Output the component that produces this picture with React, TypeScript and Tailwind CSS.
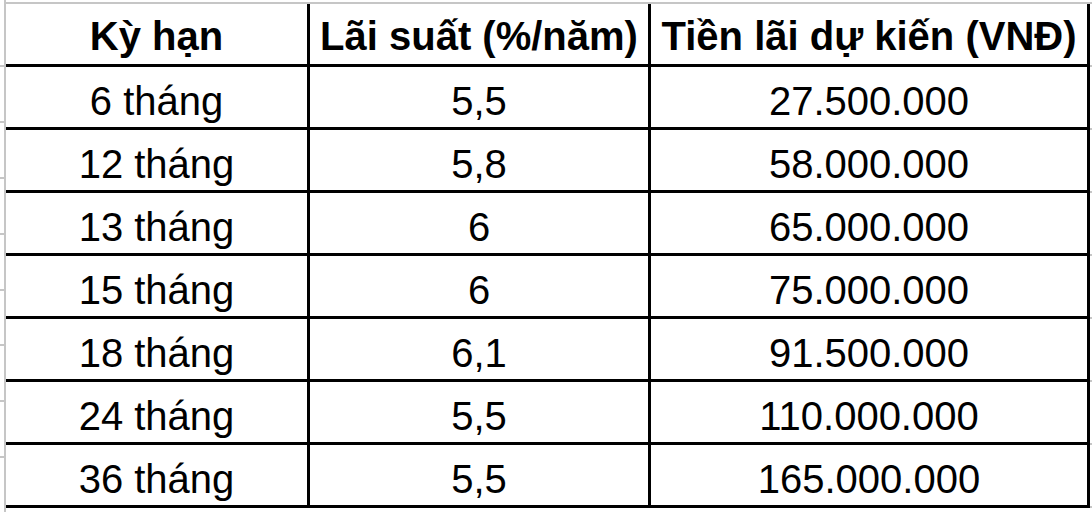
const HEADERS = ['Kỳ hạn', 'Lãi suất (%/năm)', 'Tiền lãi dự kiến (VNĐ)'];

const ROWS = [
  ['6 tháng', '5,5', '27.500.000'],
  ['12 tháng', '5,8', '58.000.000'],
  ['13 tháng', '6', '65.000.000'],
  ['15 tháng', '6', '75.000.000'],
  ['18 tháng', '6,1', '91.500.000'],
  ['24 tháng', '5,5', '110.000.000'],
  ['36 tháng', '5,5', '165.000.000'],
];

const WIDTHS = ['w-[301px]', 'w-[338px]', 'w-[436px]'];

function Row({ cells, header = false }: { cells: string[]; header?: boolean }) {
  return (
    <div className="flex flex-col">
      <div className="flex h-[60px]">
        {cells.map((c, i) => (
          <div key={i} className="flex">
            <div
              className={`${WIDTHS[i]} flex items-end justify-center leading-[40px] text-[40px] whitespace-nowrap ${
                header ? 'font-bold pb-[8px]' : 'pb-[6px]'
              }`}
            >
              {c}
            </div>
            <div className="w-[3px] bg-black" />
          </div>
        ))}
        <div className="flex-1" />
      </div>
      <div className="flex h-[3px]">
        <div className="w-[1084px] bg-black" />
        <div className="flex-1 flex items-center">
          <div className="w-full h-[2px] bg-[#c6c6c6]" />
        </div>
      </div>
    </div>
  );
}

export default function App() {
  return (
    <div className="w-[1092px] h-[512px] bg-white overflow-hidden flex text-black font-['Liberation_Sans',Arial,sans-serif]">
      {/* left gutter with gridline ticks */}
      <div className="w-[4px] flex flex-col pt-[65px]">
        {Array.from({ length: 8 }).map((_, i) => (
          <div key={i} className="h-[63px] flex flex-col">
            <div className="h-[2px] bg-[#c6c6c6]" />
          </div>
        ))}
      </div>
      <div className="w-[2px] h-full bg-[#c6c6c6]" />
      <div className="flex-1 flex flex-col pt-[2px]">
        <div className="h-[2px] bg-[#c6c6c6]" />
        <Row cells={HEADERS} header />
        {ROWS.map((r) => (
          <Row key={r[0]} cells={r} />
        ))}
      </div>
    </div>
  );
}
